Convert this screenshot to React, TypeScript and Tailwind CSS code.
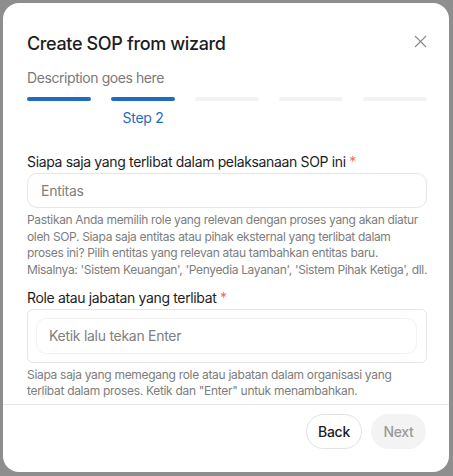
import { X } from 'lucide-react';

const steps = [true, true, false, false, false];

const entityHint = [
  'Pastikan Anda memilih role yang relevan dengan proses yang akan diatur',
  'oleh SOP. Siapa saja entitas atau pihak eksternal yang terlibat dalam',
  'proses ini? Pilih entitas yang relevan atau tambahkan entitas baru.',
  "Misalnya: 'Sistem Keuangan', 'Penyedia Layanan', 'Sistem Pihak Ketiga', dll.",
];

export default function App() {
  return (
    <div className="w-[453px] h-[476px] bg-[#8e8e8e] p-[3px] pr-[4px] font-['Inter',sans-serif]">
      <div className="bg-white rounded-2xl h-[469px] flex flex-col overflow-hidden">
        {/* Header */}
        <div className="pl-6 pr-[22px] pt-[28px]">
          <div className="flex items-center justify-between">
            <h2 className="text-[18px] leading-6 font-medium text-[#1d1d1f] tracking-[-0.02em]">Create SOP from wizard</h2>
            <button className="text-[#8a8a8a] -mr-1 mb-[5px]">
              <X className="w-[21px] h-[21px]" strokeWidth={1.3} />
            </button>
          </div>
          <p className="mt-[11px] text-[14px] leading-5 text-[#7a7a7a] tracking-[-0.03em]">Description goes here</p>
          <div className="mt-[9px] grid grid-cols-5 gap-5">
            {steps.map((done, i) => (
              <div key={i} className="flex flex-col items-center">
                <div className={`h-[4px] w-full rounded-full ${done ? 'bg-[#1f6bc2]' : 'bg-[#f2f2f2]'}`} />
                {i === 1 && <span className="mt-[7px] text-[14px] leading-5 text-[#1f6bc2] tracking-[-0.02em]">Step 2</span>}
              </div>
            ))}
          </div>
        </div>

        {/* Body */}
        <div className="pl-6 pr-[22px] pt-[24px] flex-1">
          <label className="block text-[14px] leading-5 text-[#1d1d1f] tracking-[-0.025em]">
            Siapa saja yang terlibat dalam pelaksanaan SOP ini <span className="text-[#f06a6a]">*</span>
          </label>
          <div className="mt-[1px] h-[35px] rounded-[10px] border border-[#e6e6e6] flex items-center px-[13px] text-[14px] text-[#808080] tracking-[-0.02em]">
            Entitas
          </div>
          <p className="mt-[4px] text-[12px] leading-[16.7px] text-[#7d7d7d] tracking-[-0.028em]">
            {entityHint.map((line) => (
              <span key={line} className="block whitespace-nowrap">{line}</span>
            ))}
          </p>

          <label className="block mt-[9px] text-[14px] leading-5 text-[#1d1d1f] tracking-[-0.025em]">
            Role atau jabatan yang terlibat <span className="text-[#f06a6a]">*</span>
          </label>
          <div className="mt-[1px] rounded-[6px] border border-[#e6e6e6] pl-[8px] pr-[9px] py-[8px]">
            <div className="h-[36px] rounded-[10px] border border-[#f3f3f3] flex items-center px-[12px] text-[14px] text-[#808080] tracking-[-0.02em]">
              Ketik lalu tekan Enter
            </div>
          </div>
          <p className="mt-[4px] text-[12px] leading-[16px] text-[#7d7d7d] tracking-[-0.025em]">
            Siapa saja yang memegang role atau jabatan dalam organisasi yang terlibat dalam proses. Ketik dan "Enter" untuk menambahkan.
          </p>
        </div>

        {/* Footer */}
        <div className="border-t border-[#e6e6e6] pr-[23px] pt-[9px] pb-[23px] flex justify-end gap-[9px]">
          <button className="h-[35px] w-[56px] rounded-full border border-[#e3e3e3] text-[14px] font-medium text-[#1d1d1f] tracking-[-0.02em]">Back</button>
          <button className="h-[35px] w-[55px] rounded-full bg-[#f3f3f3] text-[14px] font-medium text-[#9a9a9a] tracking-[-0.02em]">Next</button>
        </div>
      </div>
    </div>
  );
}
